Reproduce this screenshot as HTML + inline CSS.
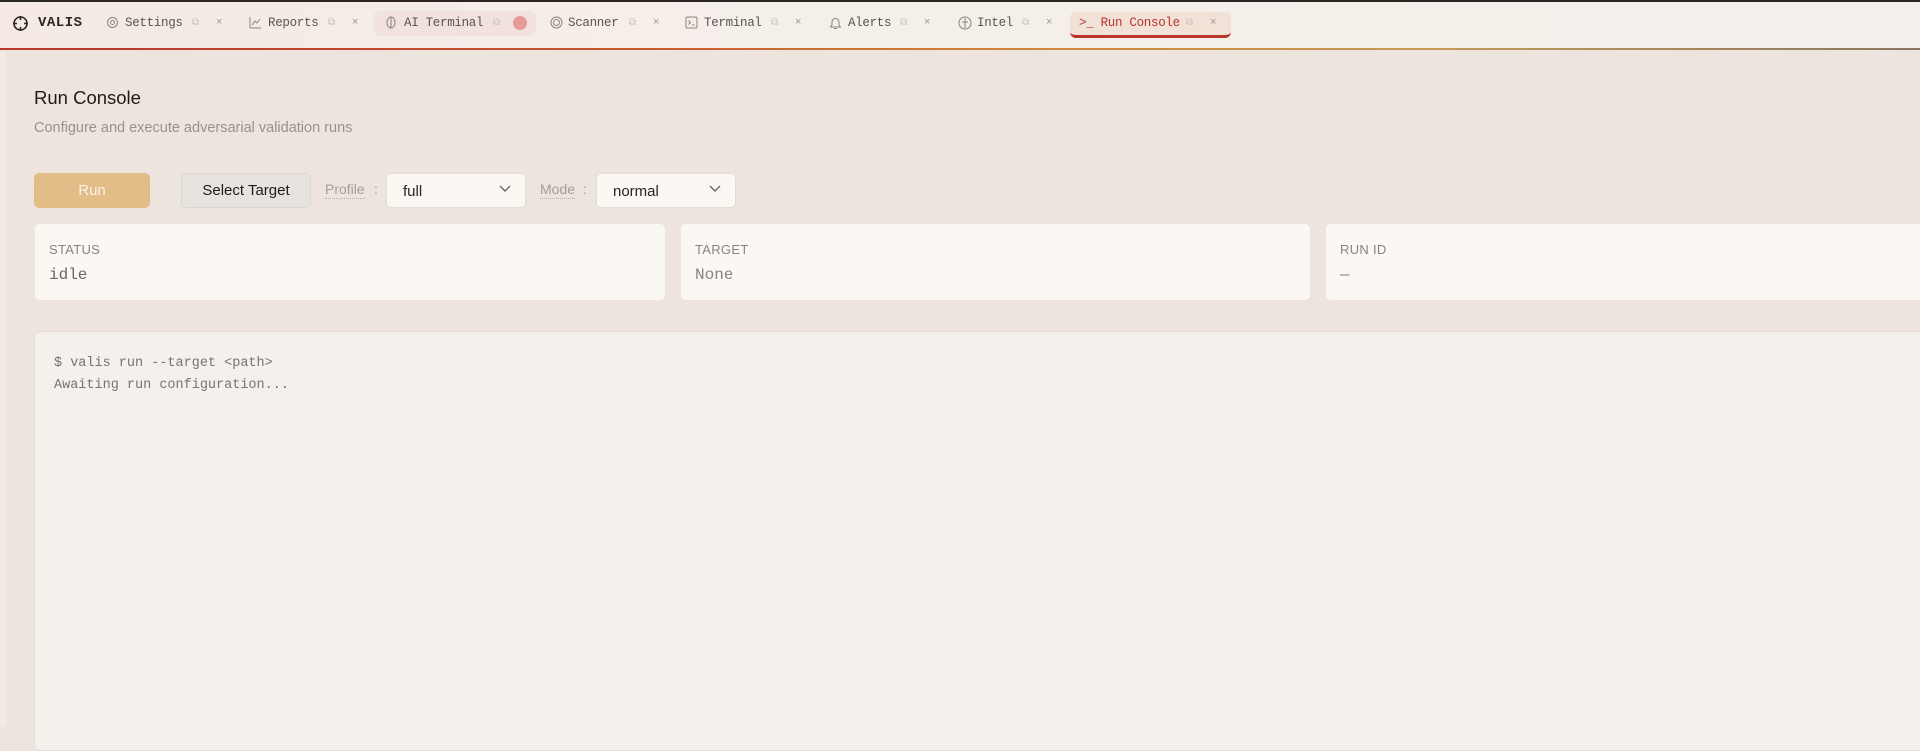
<!DOCTYPE html>
<html><head><meta charset="utf-8"><style>
*{box-sizing:border-box;margin:0;padding:0}
body{width:1920px;height:727px;overflow:hidden;background:#ece4dd;font-family:"Liberation Sans",sans-serif;position:relative}
.top{position:absolute;left:0;top:0;width:1920px;height:2px;background:#2a2624}
.bar{position:absolute;left:0;top:2px;width:1920px;height:47px;background:linear-gradient(90deg,#f4e9e4,#f5efea 40%,#f4f0eb)}
.gl{position:absolute;left:0;top:48px;width:1920px;height:2px;background:linear-gradient(90deg,#b8352c,#c5542e 30%,#d08a3a 55%,#c39a5a 75%,#8a7660)}
.t{position:absolute;top:16px;font-family:"Liberation Mono",monospace;font-size:12.5px;color:#5a5450;white-space:nowrap;letter-spacing:-0.3px}
.ic{position:absolute;top:16px}
.sm{position:absolute;top:17px;font-size:10px;color:#c9bfb8;font-family:"Liberation Sans",sans-serif}
.x{position:absolute;top:16px;font-size:11px;color:#a09690}
.abs{position:absolute}
.card{position:absolute;top:223px;height:78px;background:#fbf8f3;border-radius:6px;border:1px solid #ece6de}
.lab{position:absolute;left:14px;top:18px;font-size:13px;color:#8a837e;font-family:"Liberation Sans",sans-serif;letter-spacing:0.3px}
.val{position:absolute;left:14px;top:42px;font-family:"Liberation Mono",monospace;font-size:16px;color:#6d6763}
.sel{position:absolute;top:173px;height:35px;background:#fbf8f4;border:1px solid #e3dcd4;border-radius:5px;font-size:15px;color:#2a2422;padding:9px 16px}
.chev{position:absolute;right:14px;top:11px}
.ul{position:absolute;top:181px;font-size:14px;color:#a69d96;border-bottom:1px dotted #b8aea6;line-height:17px}
</style></head><body>
<div class="top"></div><div class="bar"></div><div class="gl"></div>
<svg class="abs" style="left:12px;top:15px" width="17" height="17" viewBox="0 0 17 17" fill="none" stroke="#2a2624" stroke-width="1.6"><circle cx="8.5" cy="8.5" r="6.5"/><path d="M8.5 1v4M8.5 12v4M1 8.5h4M12 8.5h4"/></svg>
<div class="t" style="left:38px;font-weight:bold;color:#2a2624;font-size:14px;top:15px;letter-spacing:0.5px">VALIS</div>
<!-- Settings -->
<svg class="ic" style="left:106px" width="13" height="13" viewBox="0 0 13 13" fill="none" stroke="#8a837e" stroke-width="1"><circle cx="6.5" cy="6.5" r="5"/><circle cx="6.5" cy="6.5" r="2"/></svg>
<div class="t" style="left:125px">Settings</div><div class="sm" style="left:192px">⧉</div><div class="x" style="left:216px">×</div>
<!-- Reports -->
<svg class="ic" style="left:249px" width="13" height="13" viewBox="0 0 13 13" fill="none" stroke="#8a837e" stroke-width="1"><path d="M1 1v11h11M3 9l3-4 2 2 3-4"/></svg>
<div class="t" style="left:268px">Reports</div><div class="sm" style="left:328px">⧉</div><div class="x" style="left:352px">×</div>
<!-- AI Terminal -->
<div class="abs" style="left:374px;top:11px;width:162px;height:25px;background:#f1e2dd;border-radius:6px"></div>
<svg class="ic" style="left:386px" width="10" height="13" viewBox="0 0 10 13" fill="none" stroke="#8a837e" stroke-width="1"><ellipse cx="5" cy="6.5" rx="4" ry="5.5"/><path d="M5 1v11"/></svg>
<div class="t" style="left:404px">AI Terminal</div><div class="sm" style="left:493px">⧉</div>
<div class="abs" style="left:513px;top:16px;width:14px;height:14px;border-radius:50%;background:#e79a96"></div>
<!-- Scanner -->
<svg class="ic" style="left:550px" width="13" height="13" viewBox="0 0 13 13" fill="none" stroke="#8a837e" stroke-width="1"><circle cx="6.5" cy="6.5" r="5.5"/><circle cx="6.5" cy="6.5" r="3"/></svg>
<div class="t" style="left:568px">Scanner</div><div class="sm" style="left:629px">⧉</div><div class="x" style="left:653px">×</div>
<!-- Terminal -->
<svg class="ic" style="left:685px" width="13" height="13" viewBox="0 0 13 13" fill="none" stroke="#8a837e" stroke-width="1"><rect x="1" y="1" width="11" height="11" rx="1.5"/><path d="M3.5 4.5l2 2-2 2M7 9h2.5"/></svg>
<div class="t" style="left:704px">Terminal</div><div class="sm" style="left:771px">⧉</div><div class="x" style="left:795px">×</div>
<!-- Alerts -->
<svg class="ic" style="left:829px" width="13" height="14" viewBox="0 0 13 14" fill="none" stroke="#8a837e" stroke-width="1"><path d="M3 9V6a3.5 3.5 0 017 0v3l1.5 2h-10zM5 12.5h3"/></svg>
<div class="t" style="left:848px">Alerts</div><div class="sm" style="left:900px">⧉</div><div class="x" style="left:924px">×</div>
<!-- Intel -->
<svg class="ic" style="left:958px" width="14" height="14" viewBox="0 0 14 14" fill="none" stroke="#8a837e" stroke-width="1"><circle cx="7" cy="7" r="6"/><path d="M7 2v10M4 6h6"/></svg>
<div class="t" style="left:977px">Intel</div><div class="sm" style="left:1022px">⧉</div><div class="x" style="left:1046px">×</div>
<!-- Run Console active -->
<div class="abs" style="left:1070px;top:12px;width:161px;height:26px;background:#f1e1d6;border-radius:6px;border-bottom:3px solid #b8352c"></div>
<div class="t" style="left:1079px;color:#b8352c">&gt;_ Run Console</div><div class="sm" style="left:1186px">⧉</div><div class="x" style="left:1210px">×</div>

<div class="abs" style="left:0;top:52px;width:6px;height:675px;background:#f1ebe5"></div>
<div class="abs" style="left:34px;top:87px;font-size:18.5px;color:#1f1b19">Run Console</div>
<div class="abs" style="left:34px;top:120px;font-size:14.5px;color:#9a918a">Configure and execute adversarial validation runs</div>

<div class="abs" style="left:34px;top:173px;width:116px;height:35px;background:#e2bd88;border-radius:5px;color:#fbf4ea;font-size:15px;text-align:center;line-height:35px">Run</div>
<div class="abs" style="left:181px;top:173px;width:130px;height:35px;background:#e6e3df;border:1px solid #dad5cf;border-radius:5px;color:#1f1b19;font-size:15px;text-align:center;line-height:33px">Select Target</div>
<div class="ul" style="left:325px">Profile</div><div class="abs" style="left:374px;top:181px;font-size:14px;color:#a69d96">:</div>
<div class="sel" style="left:386px;width:140px">full<svg class="chev" width="12" height="8" viewBox="0 0 12 8" fill="none" stroke="#6d6763" stroke-width="1.4"><path d="M1 1l5 5 5-5"/></svg></div>
<div class="ul" style="left:540px">Mode</div><div class="abs" style="left:583px;top:181px;font-size:14px;color:#a69d96">:</div>
<div class="sel" style="left:596px;width:140px">normal<svg class="chev" width="12" height="8" viewBox="0 0 12 8" fill="none" stroke="#6d6763" stroke-width="1.4"><path d="M1 1l5 5 5-5"/></svg></div>

<div class="card" style="left:34px;width:632px"><div class="lab">STATUS</div><div class="val">idle</div></div>
<div class="card" style="left:680px;width:631px"><div class="lab">TARGET</div><div class="val" style="color:#8a837e">None</div></div>
<div class="card" style="left:1325px;width:620px"><div class="lab">RUN ID</div><div class="val" style="color:#8a837e">—</div></div>

<div class="abs" style="left:34px;top:331px;width:1900px;height:420px;background:#f4f0eb;border:1px solid #e6dfd8;border-radius:6px"></div>
<div class="abs" style="left:54px;top:353px;font-family:'Liberation Mono',monospace;font-size:13.5px;color:#7a7470;line-height:22px">$ valis run --target &lt;path&gt;<br>Awaiting run configuration...</div>
</body></html>
